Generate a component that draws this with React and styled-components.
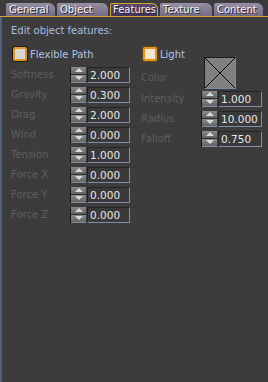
import React from 'react';
import styled, { createGlobalStyle } from 'styled-components';

const GlobalStyle = createGlobalStyle`
  html, body {
    margin: 0;
    padding: 0;
    background: #3c3c3c;
  }
  body {
    font-family: "DejaVu Sans", Verdana, sans-serif;
    font-size: 10px;
  }
`;

const tabs = [
  { name: 'General', w: 49 },
  { name: 'Object', w: 51 },
  { name: 'Features', w: 48, active: true },
  { name: 'Texture', w: 52 },
  { name: 'Content', w: 49 },
];

const flexRows = [
  ['Softness', '2.000'],
  ['Gravity', '0.300'],
  ['Drag', '2.000'],
  ['Wind', '0.000'],
  ['Tension', '1.000'],
  ['Force X', '0.000'],
  ['Force Y', '0.000'],
  ['Force Z', '0.000'],
];

const lightRows = [
  ['Intensity', '1.000'],
  ['Radius', '10.000'],
  ['Falloff', '0.750'],
];

function Arrow({ down }) {
  return (
    <svg width="8" height="5" viewBox="0 0 8 5">
      <polygon points={down ? '0,0 8,0 4,4' : '4,0 8,4 0,4'} fill="#d8d8d8" />
    </svg>
  );
}

function SpinField({ value, width }) {
  return (
    <>
      <Spinner>
        <SpinBtn><Arrow /></SpinBtn>
        <SpinBtn $bottom><Arrow down /></SpinBtn>
      </Spinner>
      <Field $w={width}>{value}</Field>
    </>
  );
}

function Features() {
  return (
    <Floater>
      <GlobalStyle />
      <TabBar>
        {tabs.map(t => (
          <Tab key={t.name} $w={t.w} $active={t.active}>{t.name}</Tab>
        ))}
      </TabBar>
      <Panel>
        <Heading>Edit object features:</Heading>
        <Columns>
          <Column>
            <CheckRow $gap={3}>
              <CheckBox />
              <CheckLabel>Flexible Path</CheckLabel>
            </CheckRow>
            {flexRows.map(([label, value]) => (
              <Row key={label}>
                <Label $w={59}>{label}</Label>
                <SpinField value={value} width={43} />
              </Row>
            ))}
          </Column>
          <Column>
            <CheckRow $gap={0}>
              <CheckBox $lit />
              <CheckLabel>Light</CheckLabel>
            </CheckRow>
            <ColorRow>
              <Label $w={63}>Color</Label>
              <Swatch>
                <svg width="30" height="30" viewBox="0 0 30 30">
                  <line x1="0" y1="0" x2="30" y2="30" stroke="#000" strokeWidth="1" />
                  <line x1="30" y1="0" x2="0" y2="30" stroke="#000" strokeWidth="1" />
                </svg>
              </Swatch>
            </ColorRow>
            {lightRows.map(([label, value]) => (
              <Row key={label}>
                <Label $w={60}>{label}</Label>
                <SpinField value={value} width={44} />
              </Row>
            ))}
          </Column>
        </Columns>
      </Panel>
    </Floater>
  );
}

const Floater = styled.div`
  width: 268px;
  height: 382px;
  display: flex;
  flex-direction: column;
  background: #3c3c3c;
  overflow: hidden;
`;

const TabBar = styled.div`
  display: flex;
  align-items: flex-end;
  gap: 2px;
  height: 16px;
  padding-left: 6px;
  border-bottom: 1px solid #d6a32e;
`;

const Tab = styled.div`
  box-sizing: border-box;
  width: ${p => p.$w}px;
  height: ${p => (p.$active ? 13 : 13)}px;
  padding-left: 3px;
  line-height: 13px;
  color: #f2f2f2;
  text-shadow: 1px 1px 0 #2a2430;
  border-radius: 2px 6px 0 0;
  background: ${p => (p.$active
    ? 'linear-gradient(#5a4870, #44345a)'
    : 'linear-gradient(#968ea2, #766c86)')};
  border: ${p => (p.$active ? '1px solid #d6a32e' : 'none')};
  border-bottom: none;
  ${p => p.$active && 'line-height: 12px; padding-left: 2px;'}
`;

const Panel = styled.div`
  flex: 1;
  border-left: 2px solid #52607a;
  padding: 8px 0 0 9px;
`;

const Heading = styled.div`
  height: 12px;
  line-height: 12px;
  color: #a9bde0;
  margin-bottom: 9px;
`;

const Columns = styled.div`
  display: grid;
  grid-template-columns: 120px 122px;
  column-gap: 10px;
`;

const Column = styled.div`
  display: flex;
  flex-direction: column;
`;

const CheckRow = styled.div`
  display: flex;
  align-items: center;
  height: 16px;
  padding-left: 2px;
  margin-bottom: ${p => p.$gap}px;
`;

const CheckBox = styled.div`
  box-sizing: border-box;
  width: 14px;
  height: 14px;
  border-radius: 2px;
  border: 2px solid #e6941c;
  background: ${p => (p.$lit ? '#f3e7d2' : '#d6d6d6')};
  box-shadow: 0 0 0 1px ${p => (p.$lit ? '#6a4a14' : '#1e1e1e')};
  margin-right: 3px;
`;

const CheckLabel = styled.span`
  color: #b3c3e3;
`;

const Row = styled.div`
  display: flex;
  align-items: center;
  height: 20px;
`;

const ColorRow = styled.div`
  display: flex;
  align-items: flex-end;
  height: 27px;
  padding-bottom: 1px;
  box-sizing: border-box;
`;

const Label = styled.span`
  width: ${p => p.$w}px;
  flex-shrink: 0;
  color: #5e5e5e;
  line-height: 20px;
`;

const Swatch = styled.div`
  box-sizing: border-box;
  width: 32px;
  height: 32px;
  margin-bottom: -1px;
  border: 1px solid;
  border-color: #1a1a1a #7c8ca4 #7c8ca4 #1a1a1a;
  background: #808080;
  display: flex;
  svg { display: block; }
`;

const Spinner = styled.div`
  display: flex;
  flex-direction: column;
  box-sizing: border-box;
  width: 16px;
  height: 16px;
  border-left: 1px solid #161616;
  margin-right: 1px;
`;

const SpinBtn = styled.div`
  flex: 1;
  display: flex;
  align-items: center;
  justify-content: center;
  background: linear-gradient(#8a8a8a, #626262);
  border-bottom: 1px solid ${p => (p.$bottom ? '#7f8fa6' : '#2c2c2c')};
  svg { display: block; }
`;

const Field = styled.div`
  box-sizing: border-box;
  width: ${p => p.$w}px;
  height: 16px;
  border: 1px solid;
  border-color: #242424 #8090a8 #8090a8 #242424;
  background: #3a3a3a;
  color: #e8e8e8;
  padding-left: 2px;
  line-height: 14px;
  font-size: 10.5px;
`;

export default Features;
